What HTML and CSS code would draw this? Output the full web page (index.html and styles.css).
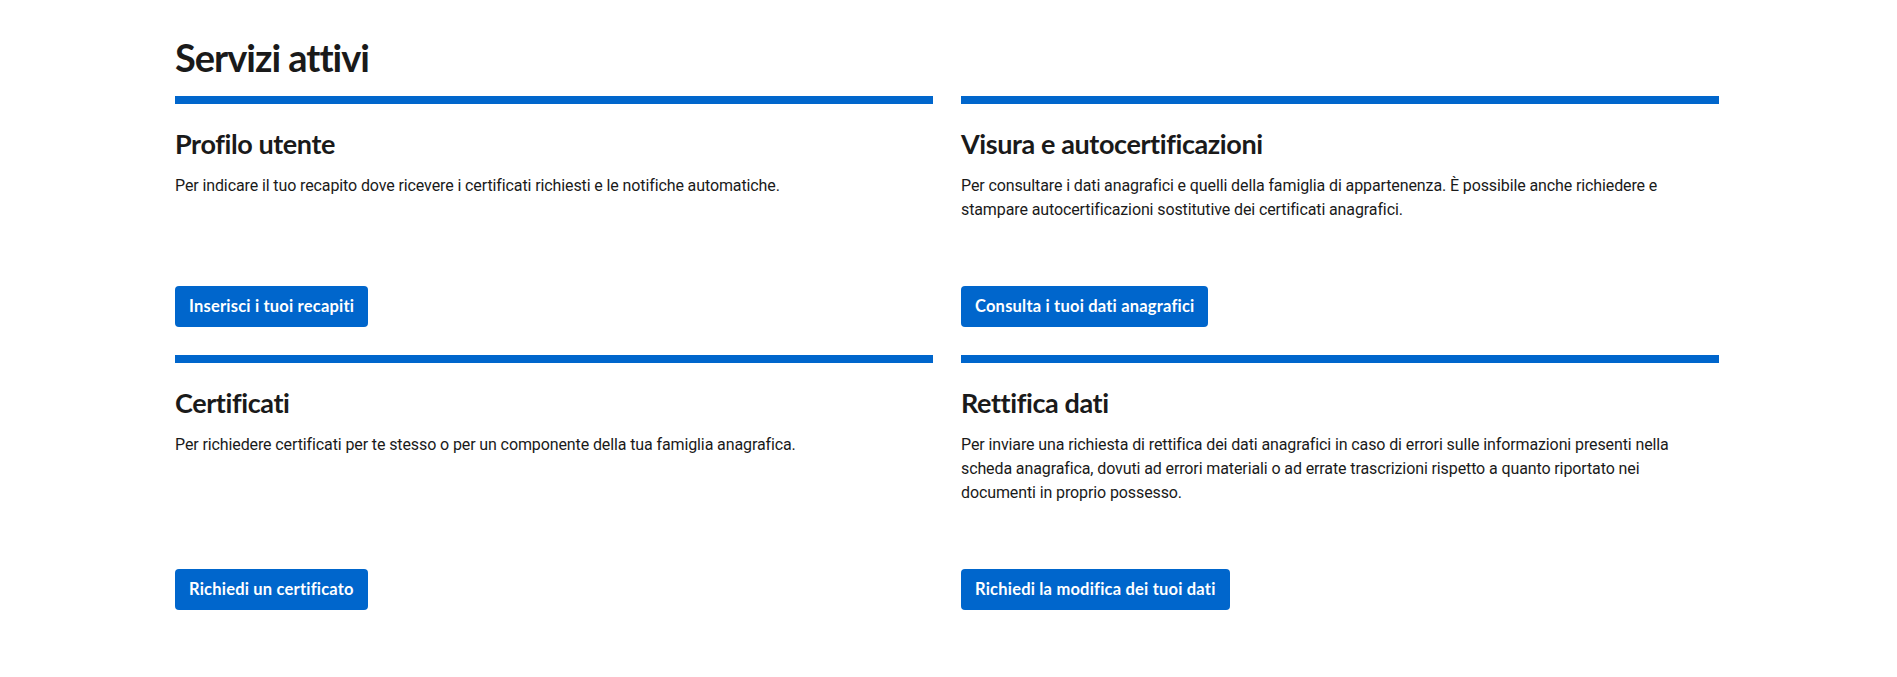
FILE: index.html
```html
<!DOCTYPE html>
<html lang="it">
<head>
<meta charset="utf-8">
<title>Servizi attivi</title>
<link rel="stylesheet" href="styles.css">
</head>
<body>
<main class="page">
  <h2 class="page-title">Servizi attivi</h2>
  <div class="services">
    <section class="card">
      <h3 class="card-title">Profilo utente</h3>
      <p class="card-text">Per indicare il tuo recapito dove ricevere i certificati richiesti e le notifiche automatiche.</p>
      <a class="btn" href="#">Inserisci i tuoi recapiti</a>
    </section>
    <section class="card">
      <h3 class="card-title">Visura e autocertificazioni</h3>
      <p class="card-text">Per consultare i dati anagrafici e quelli della famiglia di appartenenza. È possibile anche richiedere e stampare autocertificazioni sostitutive dei certificati anagrafici.</p>
      <a class="btn" href="#">Consulta i tuoi dati anagrafici</a>
    </section>
    <section class="card">
      <h3 class="card-title">Certificati</h3>
      <p class="card-text">Per richiedere certificati per te stesso o per un componente della tua famiglia anagrafica.</p>
      <a class="btn" href="#">Richiedi un certificato</a>
    </section>
    <section class="card">
      <h3 class="card-title">Rettifica dati</h3>
      <p class="card-text">Per inviare una richiesta di rettifica dei dati anagrafici in caso di errori sulle informazioni presenti nella scheda anagrafica, dovuti ad errori materiali o ad errate trascrizioni rispetto a quanto riportato nei documenti in proprio possesso.</p>
      <a class="btn" href="#">Richiedi la modifica dei tuoi dati</a>
    </section>
  </div>
</main>
</body>
</html>
```
FILE: styles.css
```css
html, body {
  margin: 0;
  background: #ffffff;
}
body {
  font-family: Roboto, "Liberation Sans", sans-serif;
  color: #1a1a1a;
}
.page {
  padding: 33px 178px 0 175px;
}
.page-title {
  margin: 0 0 15px;
  font-family: Lato, "Liberation Sans", sans-serif;
  font-weight: 700;
  font-size: 38px;
  line-height: 48px;
  letter-spacing: -1px;
  color: #1a1a1a;
}
.services {
  display: grid;
  grid-template-columns: 1fr 1fr;
  column-gap: 28px;
  row-gap: 28px;
}
.card {
  display: flex;
  flex-direction: column;
  align-items: flex-start;
  border-top: 8px solid #0066cc;
  padding-top: 22px;
}
.card-title {
  margin: 0 0 12px;
  font-family: Lato, "Liberation Sans", sans-serif;
  font-weight: 700;
  font-size: 27px;
  line-height: 36px;
  letter-spacing: -0.4px;
  color: #1a1a1a;
}
.card-text {
  margin: 0 0 64px;
  padding-right: 16px;
  font-size: 16px;
  line-height: 24px;
  letter-spacing: -0.11px;
  color: #1a1a1a;
}
.btn {
  margin-top: auto;
  display: inline-block;
  padding: 8px 14px;
  background: #0066cc;
  color: #ffffff;
  border-radius: 4px;
  font-family: Lato, "Liberation Sans", sans-serif;
  font-weight: 700;
  font-size: 16.5px;
  line-height: 25px;
  letter-spacing: 0.2px;
  text-decoration: none;
}
```
